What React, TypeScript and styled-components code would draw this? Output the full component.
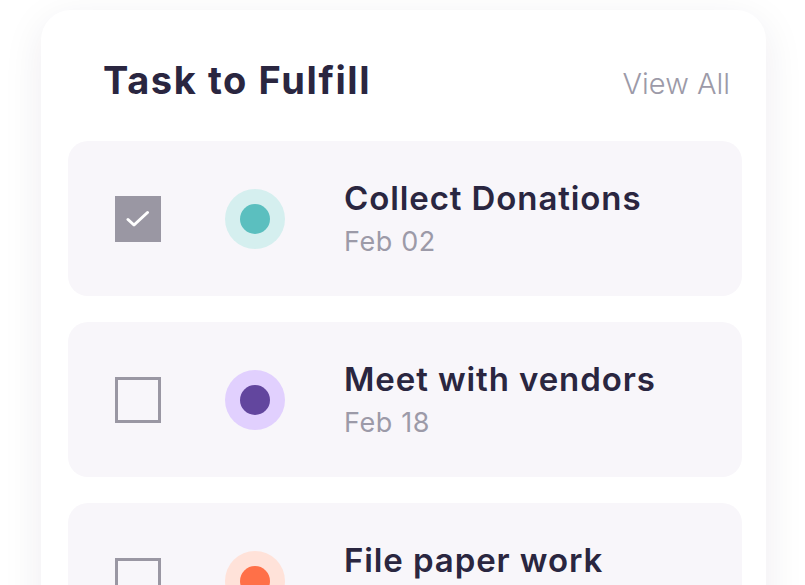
import styled, { createGlobalStyle } from 'styled-components';

const GlobalStyle = createGlobalStyle`
  * { box-sizing: border-box; }
  html, body { margin: 0; padding: 0; background: #ffffff; }
  body { font-family: Inter, "Noto Sans", sans-serif; overflow: hidden; }
`;

const Page = styled.div`
  width: 805px;
  height: 585px;
  padding: 10px 39px 0 41px;
  overflow: hidden;
`;

const Card = styled.section`
  background: #fff;
  border-radius: 30px;
  box-shadow: 0 10px 40px rgba(40, 30, 70, 0.08);
  padding: 48px 24px 40px 27px;
  height: 640px;
`;

const Header = styled.header`
  display: flex;
  justify-content: space-between;
  align-items: baseline;
  padding: 0 12px 0 35px;
  margin-bottom: 39px;
`;

const Title = styled.h1`
  margin: 0;
  font-size: 38px;
  font-weight: 700;
  color: #2a2640;
  letter-spacing: 1.6px;
  line-height: 44px;
`;

const ViewAll = styled.a`
  font-size: 29px;
  font-weight: 300;
  color: #9c9aa8;
  text-decoration: none;
`;

const TaskList = styled.ul`
  list-style: none;
  margin: 0;
  padding: 0;
  display: flex;
  flex-direction: column;
  gap: 26px;
`;

const Task = styled.li`
  height: 155px;
  background: #f8f6fa;
  border-radius: 20px;
  display: flex;
  align-items: center;
  padding-left: 47px;
`;

const Check = styled.span<{ $done?: boolean }>`
  width: 46px;
  height: 46px;
  flex-shrink: 0;
  display: flex;
  align-items: center;
  justify-content: center;
  background: ${p => (p.$done ? '#9a97a3' : 'transparent')};
  border: 3px solid #9a97a3;
  border-width: ${p => (p.$done ? '1px' : '3px')};
  margin-right: 64px;
`;

const Dot = styled.span<{ $outer: string; $inner: string }>`
  width: 60px;
  height: 60px;
  flex-shrink: 0;
  border-radius: 50%;
  background: ${p => p.$outer};
  display: flex;
  align-items: center;
  justify-content: center;
  margin-right: 59px;
  &::after {
    content: '';
    width: 30px;
    height: 30px;
    border-radius: 50%;
    background: ${p => p.$inner};
  }
`;

const Info = styled.div`
  display: flex;
  flex-direction: column;
  gap: 8px;
  margin-top: -2px;
`;

const Name = styled.div`
  font-size: 33px;
  font-weight: 600;
  color: #2a2640;
  letter-spacing: 0.9px;
  line-height: 40px;
`;

const DateText = styled.div`
  font-size: 27px;
  font-weight: 400;
  color: #9c9aa8;
  letter-spacing: 0.6px;
  line-height: 32px;
`;

const tasks = [
  { name: 'Collect Donations', date: 'Feb 02', done: true, outer: '#d5efef', inner: '#5bbfbf' },
  { name: 'Meet with vendors', date: 'Feb 18', done: false, outer: '#e1d0fe', inner: '#62469e' },
  { name: 'File paper work', date: 'Mar 01', done: false, outer: '#ffe2d9', inner: '#ff7048' },
];

const App = () => (
  <>
    <GlobalStyle />
    <Page>
      <Card>
        <Header>
          <Title>Task to Fulfill</Title>
          <ViewAll href="#">View All</ViewAll>
        </Header>
        <TaskList>
          {tasks.map(t => (
            <Task key={t.name}>
              <Check $done={t.done}>
                {t.done && (
                  <svg width="24" height="18" viewBox="0 0 24 18">
                    <path d="M2 9.5 L8 15 L21.5 2.5" fill="none" stroke="#fff" strokeWidth="3" strokeLinecap="round" strokeLinejoin="round" />
                  </svg>
                )}
              </Check>
              <Dot $outer={t.outer} $inner={t.inner} />
              <Info>
                <Name>{t.name}</Name>
                <DateText>{t.date}</DateText>
              </Info>
            </Task>
          ))}
        </TaskList>
      </Card>
    </Page>
  </>
);

export default App;
